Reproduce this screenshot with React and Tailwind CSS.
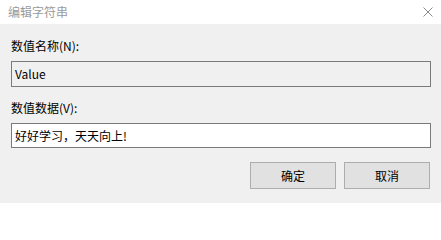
export default function App() {
  const font = { fontFamily: '"Noto Sans CJK SC", "Microsoft YaHei", sans-serif' }
  return (
    <div className="w-[441px] h-[203px] bg-[#f0f0f0] text-[12px] text-black overflow-hidden" style={font}>
      {/* title bar */}
      <div className="h-[24px] bg-white flex items-center justify-between pl-[8px] pr-[8px]">
        <span className="text-[#9a9a9a] leading-none">编辑字符串</span>
        <svg width="10" height="10" viewBox="0 0 10 10" className="mr-[0px]">
          <path d="M0.5 0.5L9.5 9.5M9.5 0.5L0.5 9.5" stroke="#8a8a8a" strokeWidth="1" />
        </svg>
      </div>

      <div className="pl-[11px] pr-[10px]">
        <div className="pt-[14px] leading-[16px]">数值名称(N):</div>
        <div className="mt-[7px] h-[26px] w-[420px] border border-[#7a7a7a] bg-[#f0f0f0] flex items-center pl-[3px]">
          Value
        </div>

        <div className="mt-[13px] leading-[16px]">数值数据(V):</div>
        <div className="mt-[7px] h-[25px] w-[420px] border border-[#7a7a7a] bg-white flex items-center pl-[3px]">
          好好学习，天天向上!
        </div>

        <div className="mt-[14px] flex justify-end gap-[8px] pr-[1px]">
          <button className="w-[86px] h-[27px] bg-[#e1e1e1] border border-[#adadad] flex items-center justify-center">
            确定
          </button>
          <button className="w-[86px] h-[27px] bg-[#e1e1e1] border border-[#adadad] flex items-center justify-center">
            取消
          </button>
        </div>
      </div>
    </div>
  )
}
